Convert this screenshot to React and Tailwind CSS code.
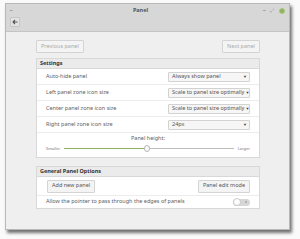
import React from 'react';

// 設定行のデータ
const ROWS = [
  { label: 'Auto-hide panel', value: 'Always show panel' },
  { label: 'Left panel zone icon size', value: 'Scale to panel size optimally' },
  { label: 'Center panel zone icon size', value: 'Scale to panel size optimally' },
  { label: 'Right panel zone icon size', value: '24px' },
];

function Dropdown({ value }) {
  return (
    <div className="w-[82px] h-[10px] flex items-center justify-between pl-[3px] pr-[2px] gap-[1px] bg-[#f6f6f6] border border-[#d2d2d2] rounded-[1px] text-[#555]">
      <span className="whitespace-nowrap">{value}</span>
      <span className="text-[4px] text-[#444]">▼</span>
    </div>
  );
}

function Button({ children, disabled }) {
  return (
    <div className={`h-[13px] px-[4px] flex items-center bg-[#f4f4f4] border border-[#d4d4d4] rounded-[1px] ${disabled ? 'text-[#aaa]' : 'text-[#555]'}`}>
      {children}
    </div>
  );
}

export default function App() {
  return (
    <div className="w-[300px] h-[239px] bg-[#fafafa] overflow-hidden text-[5.5px] leading-none" style={{ fontFamily: '"Noto Sans", "Liberation Sans", sans-serif' }}>
      <div className="ml-[5px] mt-[3px] w-[285px] h-[227px] flex flex-col bg-[#efefef] border border-[#b8b8b8] shadow-[2px_3px_3px_rgba(0,0,0,0.55)]">

        {/* タイトルバー */}
        <div className="h-[28px] bg-[#d7d7d7] border-b border-[#c4c4c4] flex flex-col px-[4px]">
          <div className="h-[13px] flex items-center justify-between">
            <span className="w-[8px] text-[#8a8a8a] text-[4px]">━</span>
            <span className="font-bold text-[#555] text-[5.5px]">Panel</span>
            <div className="flex items-center gap-[5px] text-[#888]">
              <span className="text-[4px]">━</span>
              <span className="text-[5px]">⤢</span>
              <span className="w-[6px] h-[6px] rounded-full bg-[#8fb35f] border border-[#a6c97a]" />
            </div>
          </div>
          <div className="w-[10px] h-[10px] flex items-center justify-center bg-[#e2e2e2] border border-[#c6c6c6] rounded-[1px]">
            <svg width="6" height="6" viewBox="0 0 6 6" fill="none" stroke="#555" strokeWidth="1.1">
              <path d="M5.5 3H1M3 1L1 3l2 2" />
            </svg>
          </div>
        </div>

        <div className="flex-1 flex flex-col pl-[30px] pr-[29px] pt-[8px]">
          {/* 前後のパネル */}
          <div className="flex justify-between">
            <Button disabled>Previous panel</Button>
            <Button disabled>Next panel</Button>
          </div>

          {/* 設定 */}
          <div className="mt-[5px] bg-white border border-[#d8d8d8] flex flex-col text-[#606060]">
            <div className="h-[10px] bg-[#ebebeb] border-b border-[#d8d8d8] flex items-center px-[3px] font-bold text-[#333]">
              Settings
            </div>
            {ROWS.map((row) => (
              <div key={row.label} className="h-[16px] flex items-center justify-between pl-[9px] pr-[9px] border-b border-[#ececec]">
                <span>{row.label}</span>
                <Dropdown value={row.value} />
              </div>
            ))}
            <div className="h-[24px] flex flex-col items-center pt-[3px] px-[9px]">
              <span>Panel height:</span>
              <div className="w-full flex items-center gap-[4px] mt-[5px] text-[4px] text-[#777]">
                <span>Smaller</span>
                <div className="relative flex-1 h-[1px] bg-[#bdbdbd]">
                  <div className="h-[1px] w-[49%] bg-[#8fb35f]" />
                  <div className="absolute left-[49%] top-[-3px] w-[6px] h-[7px] -ml-[3px] rounded-full bg-[#f8f8f8] border border-[#b8b8b8]" />
                </div>
                <span>Larger</span>
              </div>
            </div>
          </div>

          {/* パネル全般のオプション */}
          <div className="mt-[8px] bg-white border border-[#d8d8d8] flex flex-col text-[#606060]">
            <div className="h-[10px] bg-[#ebebeb] border-b border-[#d8d8d8] flex items-center px-[3px] font-bold text-[#333]">
              General Panel Options
            </div>
            <div className="h-[19px] flex items-center justify-between pl-[10px] pr-[9px] border-b border-[#ececec]">
              <Button>Add new panel</Button>
              <Button>Panel edit mode</Button>
            </div>
            <div className="h-[12px] flex items-center justify-between pl-[9px] pr-[9px]">
              <span>Allow the pointer to pass through the edges of panels</span>
              <div className="relative w-[17px] h-[7px] rounded-full bg-[#d6d6d6] flex items-center justify-end pr-[3px]">
                <span className="w-[2px] h-[2px] rounded-full border border-[#999]" />
                <span className="absolute left-0 top-[-0.5px] w-[8px] h-[8px] rounded-full bg-white border border-[#c8c8c8]" />
              </div>
            </div>
          </div>
        </div>
      </div>
    </div>
  );
}
